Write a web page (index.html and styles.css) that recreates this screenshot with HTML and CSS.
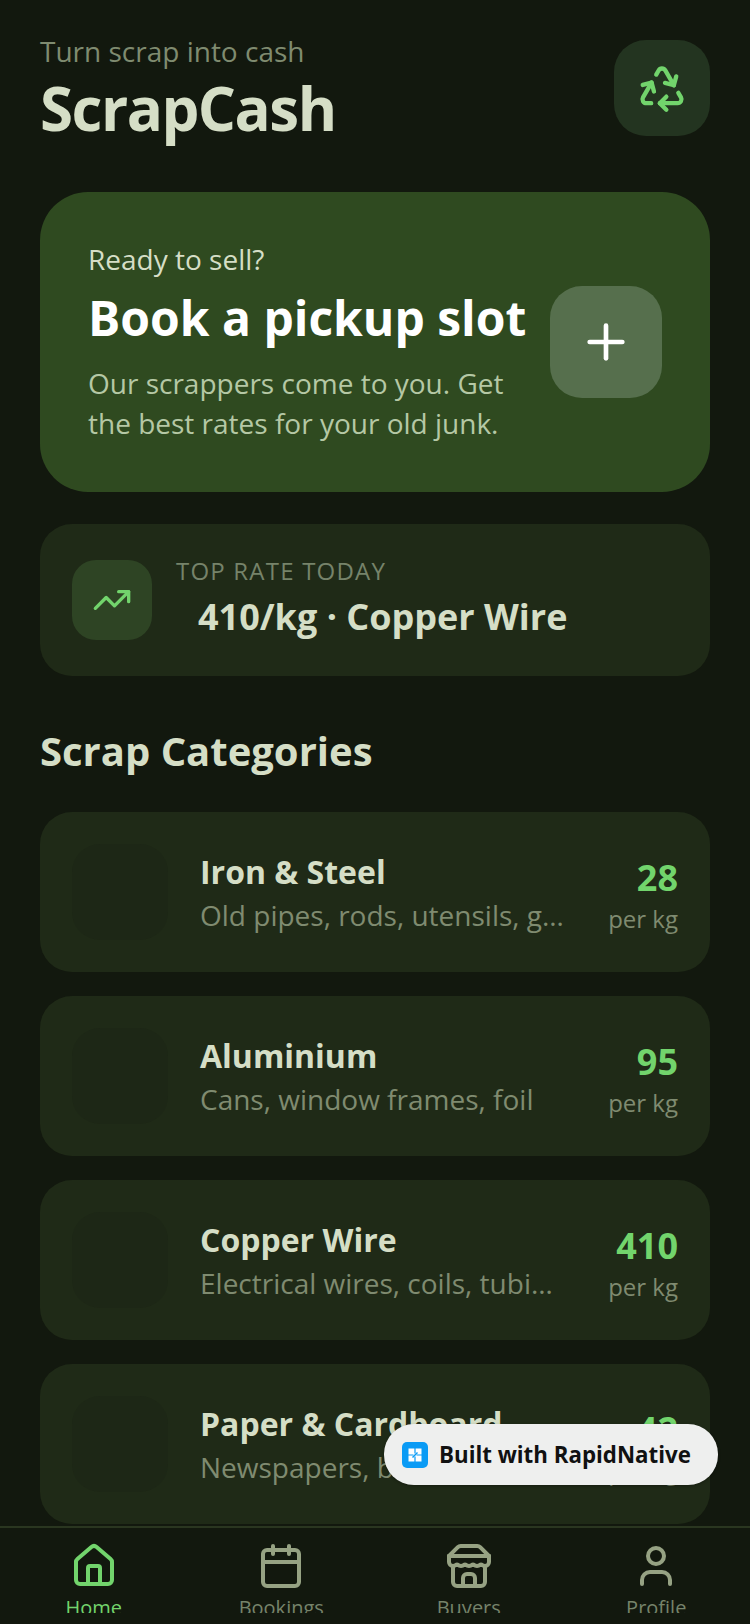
FILE: index.html
```html
<!DOCTYPE html>
<html>
<head>
    <meta charset="UTF-8">
    <title>ScrapCash</title>
    <link rel="stylesheet" href="styles.css">
</head>
<body>
    <div class="screen">
        <div class="content">
            <div class="header">
                <div>
                    <p class="tagline">Turn scrap into cash</p>
                    <h1 class="brand">ScrapCash</h1>
                </div>
                <div class="logo-box">
                    <svg class="icon green" width="52" height="52" viewBox="0 0 24 24">
                        <path d="M7 19H4.815a1.83 1.83 0 0 1-1.57-.881 1.785 1.785 0 0 1-.004-1.784L7.196 9.5"/>
                        <path d="M11 19h8.203a1.83 1.83 0 0 0 1.556-.89 1.784 1.784 0 0 0 0-1.775l-1.226-2.12"/>
                        <path d="m14 16-3 3 3 3"/>
                        <path d="M8.293 13.596 7.196 9.5 3.1 10.598"/>
                        <path d="m9.344 5.811 1.093-1.892A1.83 1.83 0 0 1 11.985 3a1.784 1.784 0 0 1 1.546.888l3.943 6.843"/>
                        <path d="m13.378 9.633 4.096 1.098 1.097-4.096"/>
                    </svg>
                </div>
            </div>

            <div class="hero">
                <div class="hero-text">
                    <p class="hero-kicker">Ready to sell?</p>
                    <h2 class="hero-title">Book a pickup slot</h2>
                    <p class="hero-desc">Our scrappers come to you. Get the best rates for your old junk.</p>
                </div>
                <div class="hero-btn">
                    <svg class="icon white" width="56" height="56" viewBox="0 0 24 24">
                        <path d="M5 12h14"/>
                        <path d="M12 5v14"/>
                    </svg>
                </div>
            </div>

            <div class="top-rate">
                <div class="top-rate-icon">
                    <svg class="icon green" width="40" height="40" viewBox="0 0 24 24">
                        <path d="M16 7h6v6"/>
                        <path d="m22 7-8.5 8.5-5-5L2 17"/>
                    </svg>
                </div>
                <div class="top-rate-text">
                    <p class="top-rate-label">TOP RATE TODAY</p>
                    <p class="top-rate-value">410/kg · Copper Wire</p>
                </div>
            </div>

            <h2 class="section-title">Scrap Categories</h2>

            <div class="cat-list">
                <div class="cat-card">
                    <div class="cat-thumb"></div>
                    <div class="cat-text">
                        <p class="cat-name">Iron &amp; Steel</p>
                        <p class="cat-desc">Old pipes, rods, utensils, gates</p>
                    </div>
                    <div class="cat-price">
                        <p class="price">28</p>
                        <p class="per">per kg</p>
                    </div>
                </div>
                <div class="cat-card">
                    <div class="cat-thumb"></div>
                    <div class="cat-text">
                        <p class="cat-name">Aluminium</p>
                        <p class="cat-desc">Cans, window frames, foil</p>
                    </div>
                    <div class="cat-price">
                        <p class="price">95</p>
                        <p class="per">per kg</p>
                    </div>
                </div>
                <div class="cat-card">
                    <div class="cat-thumb"></div>
                    <div class="cat-text">
                        <p class="cat-name">Copper Wire</p>
                        <p class="cat-desc">Electrical wires, coils, tubing scrap</p>
                    </div>
                    <div class="cat-price">
                        <p class="price">410</p>
                        <p class="per">per kg</p>
                    </div>
                </div>
                <div class="cat-card">
                    <div class="cat-thumb"></div>
                    <div class="cat-text">
                        <p class="cat-name">Paper &amp; Cardboard</p>
                        <p class="cat-desc">Newspapers, boxes, books</p>
                    </div>
                    <div class="cat-price">
                        <p class="price">42</p>
                        <p class="per">per kg</p>
                    </div>
                </div>
            </div>
        </div>

        <div class="nav">
            <div class="nav-item active">
                <svg class="icon" width="48" height="48" viewBox="0 0 24 24">
                    <path d="M15 21v-8a1 1 0 0 0-1-1h-4a1 1 0 0 0-1 1v8"/>
                    <path d="M3 10a2 2 0 0 1 .709-1.528l7-5.999a2 2 0 0 1 2.582 0l7 5.999A2 2 0 0 1 21 10v9a2 2 0 0 1-2 2H5a2 2 0 0 1-2-2z"/>
                </svg>
                <span class="nav-label">Home</span>
            </div>
            <div class="nav-item">
                <svg class="icon" width="48" height="48" viewBox="0 0 24 24">
                    <path d="M8 2v4"/>
                    <path d="M16 2v4"/>
                    <rect width="18" height="18" x="3" y="4" rx="2"/>
                    <path d="M3 10h18"/>
                </svg>
                <span class="nav-label">Bookings</span>
            </div>
            <div class="nav-item">
                <svg class="icon" width="48" height="48" viewBox="0 0 24 24">
                    <path d="m2 7 4.41-4.41A2 2 0 0 1 7.83 2h8.34a2 2 0 0 1 1.42.59L22 7"/>
                    <path d="M4 12v8a2 2 0 0 0 2 2h12a2 2 0 0 0 2-2v-8"/>
                    <path d="M15 22v-4a2 2 0 0 0-2-2h-2a2 2 0 0 0-2 2v4"/>
                    <path d="M2 7h20"/>
                    <path d="M22 7v3a2 2 0 0 1-2 2a2.7 2.7 0 0 1-1.59-.63.7.7 0 0 0-.82 0A2.7 2.7 0 0 1 16 12a2.7 2.7 0 0 1-1.59-.63.7.7 0 0 0-.82 0A2.7 2.7 0 0 1 12 12a2.7 2.7 0 0 1-1.59-.63.7.7 0 0 0-.82 0A2.7 2.7 0 0 1 8 12a2.7 2.7 0 0 1-1.59-.63.7.7 0 0 0-.82 0A2.7 2.7 0 0 1 4 12a2 2 0 0 1-2-2V7"/>
                </svg>
                <span class="nav-label">Buyers</span>
            </div>
            <div class="nav-item">
                <svg class="icon" width="48" height="48" viewBox="0 0 24 24">
                    <path d="M19 21v-2a4 4 0 0 0-4-4H9a4 4 0 0 0-4 4v2"/>
                    <circle cx="12" cy="7" r="4"/>
                </svg>
                <span class="nav-label">Profile</span>
            </div>
        </div>

        <div class="badge">
            <svg class="badge-logo" width="26" height="26" viewBox="0 0 26 26">
                <rect width="26" height="26" rx="5" fill="#0a9bf5"/>
                <rect x="6.500" y="6.500" width="13" height="13" fill="#fff"/>
                <path d="M13 6v5.500M13 14.500V20M6 13h5.500M14.500 13H20" stroke="#0a9bf5" stroke-width="1.200"/>
                <path d="M10.500 15.500l5-5" stroke="#0a9bf5" stroke-width="1.400"/>
            </svg>
            <span class="badge-text">Built with RapidNative</span>
        </div>
    </div>
</body>
</html>
```

FILE: styles.css
```css
* {
    box-sizing: border-box;
}

body {
    margin: 0;
    background-color: #12180e;
    font-family: "Open Sans", sans-serif;
}

p, h1, h2 {
    margin: 0;
}

.screen {
    position: relative;
    display: flex;
    flex-direction: column;
    width: 750px;
    height: 1624px;
    overflow: hidden;
}

.content {
    flex: 1;
    min-height: 0;
    overflow: hidden;
    padding: 35px 40px 0;
}

.icon {
    flex-shrink: 0;
    fill: none;
    stroke: currentColor;
    stroke-width: 2;
    stroke-linecap: round;
    stroke-linejoin: round;
}

.green {
    color: #72d46c;
}

.white {
    color: #ffffff;
}

/* header */
.header {
    display: flex;
    justify-content: space-between;
    align-items: flex-start;
    height: 105px;
    margin-bottom: 52px;
}

.tagline {
    font-size: 28px;
    line-height: 32px;
    color: #7f8b70;
}

.brand {
    margin-top: 3px;
    font-size: 60px;
    line-height: 76px;
    font-weight: 700;
    letter-spacing: -1.500px;
    color: #d5dec6;
}

.logo-box {
    display: flex;
    align-items: center;
    justify-content: center;
    width: 96px;
    height: 96px;
    margin-top: 5px;
    border-radius: 32px;
    background-color: #233420;
}

/* hero card */
.hero {
    display: flex;
    align-items: center;
    gap: 24px;
    height: 300px;
    padding: 48px;
    border-radius: 48px;
    background-color: #2f4a20;
}

.hero-text {
    flex: 1;
    min-width: 0;
    padding-bottom: 2px;
}

.hero-kicker {
    font-size: 28px;
    line-height: 40px;
    color: #d5dec6;
}

.hero-title {
    margin-top: 9px;
    font-size: 48px;
    line-height: 60px;
    font-weight: 700;
    color: #ffffff;
    white-space: nowrap;
}

.hero-desc {
    margin-top: 15px;
    font-size: 28px;
    line-height: 40px;
    color: #b5c8a5;
}

.hero-btn {
    flex-shrink: 0;
    display: flex;
    align-items: center;
    justify-content: center;
    width: 112px;
    height: 112px;
    border-radius: 32px;
    background-color: #566f4d;
}

/* top rate */
.top-rate {
    display: flex;
    align-items: center;
    gap: 24px;
    height: 152px;
    margin-top: 32px;
    padding: 0 32px;
    border-radius: 32px;
    background-color: #1f2a17;
}

.top-rate-icon {
    display: flex;
    align-items: center;
    justify-content: center;
    width: 80px;
    height: 80px;
    border-radius: 24px;
    background-color: #2e4424;
}

.top-rate-text {
    padding-bottom: 4px;
}

.top-rate-label {
    font-size: 24px;
    line-height: 32px;
    letter-spacing: 1.200px;
    color: #76836a;
}

.top-rate-value {
    margin-top: 6px;
    padding-left: 22px;
    font-size: 36px;
    line-height: 48px;
    font-weight: 700;
    color: #d5dec6;
}

/* categories */
.section-title {
    margin-top: 49px;
    font-size: 40px;
    line-height: 52px;
    font-weight: 700;
    color: #d5dec6;
}

.cat-list {
    display: flex;
    flex-direction: column;
    gap: 24px;
    margin-top: 35px;
}

.cat-card {
    display: flex;
    align-items: center;
    height: 160px;
    padding: 0 32px;
    border-radius: 32px;
    background-color: #1f2a17;
}

.cat-thumb {
    flex-shrink: 0;
    width: 96px;
    height: 96px;
    margin-right: 32px;
    border-radius: 28px;
    background-color: #1d2716;
}

.cat-text {
    flex: 1;
    min-width: 0;
    margin-right: 40px;
}

.cat-name {
    font-size: 32px;
    line-height: 44px;
    font-weight: 700;
    color: #d5dec6;
    white-space: nowrap;
}

.cat-desc {
    margin-top: 1px;
    font-size: 28px;
    line-height: 40px;
    color: #7f8b70;
    white-space: nowrap;
    overflow: hidden;
    text-overflow: ellipsis;
}

.cat-price {
    flex-shrink: 0;
    padding-top: 4px;
    text-align: right;
}

.price {
    font-size: 36px;
    line-height: 48px;
    font-weight: 700;
    color: #72d46c;
}

.per {
    margin-top: 1px;
    font-size: 24px;
    line-height: 32px;
    color: #7f8b70;
}

/* bottom nav */
.nav {
    flex-shrink: 0;
    display: flex;
    height: 98px;
    border-top: 2px solid #2a3620;
    padding-top: 14px;
}

.nav-item {
    flex: 1;
    display: flex;
    flex-direction: column;
    align-items: center;
    height: 71px;
    overflow: hidden;
    color: #96a283;
}

.nav-item.active {
    color: #72d46c;
}

.nav-label {
    margin-top: 4px;
    font-size: 20px;
    line-height: 28px;
    color: #76836a;
}

.nav-item.active .nav-label {
    color: #72d46c;
}

/* badge over the page */
.badge {
    position: absolute;
    left: 384px;
    top: 1424px;
    display: flex;
    align-items: center;
    gap: 11px;
    width: 334px;
    height: 61px;
    padding-left: 18px;
    border-radius: 30px;
    background-color: #eeefee;
    box-shadow: 0 1px 3px rgba(0, 0, 0, 0.3);
}

.badge-logo {
    flex-shrink: 0;
}

.badge-text {
    font-size: 22.300px;
    font-weight: 700;
    color: #111111;
    white-space: nowrap;
}
```
